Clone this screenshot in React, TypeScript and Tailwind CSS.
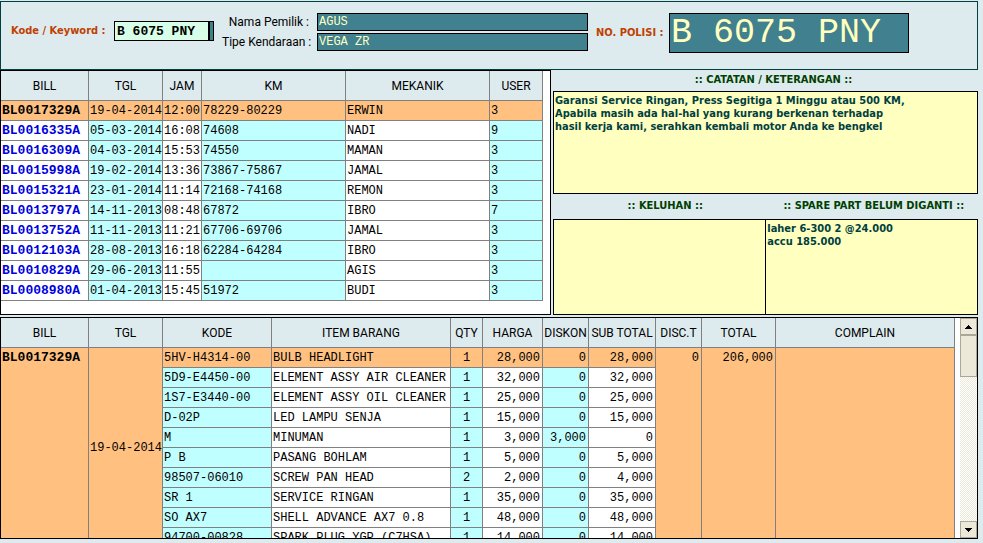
import React from "react";

type Visit = {
  bill: string;
  tgl: string;
  jam: string;
  km: string;
  mekanik: string;
  user: string;
};

type Item = {
  kode: string;
  nama: string;
  qty: string;
  harga: string;
  diskon: string;
  sub: string;
};

const visits: Visit[] = [
  { bill: "BL0017329A", tgl: "19-04-2014", jam: "12:00", km: "78229-80229", mekanik: "ERWIN", user: "3" },
  { bill: "BL0016335A", tgl: "05-03-2014", jam: "16:08", km: "74608", mekanik: "NADI", user: "9" },
  { bill: "BL0016309A", tgl: "04-03-2014", jam: "15:53", km: "74550", mekanik: "MAMAN", user: "3" },
  { bill: "BL0015998A", tgl: "19-02-2014", jam: "13:36", km: "73867-75867", mekanik: "JAMAL", user: "3" },
  { bill: "BL0015321A", tgl: "23-01-2014", jam: "11:14", km: "72168-74168", mekanik: "REMON", user: "3" },
  { bill: "BL0013797A", tgl: "14-11-2013", jam: "08:48", km: "67872", mekanik: "IBRO", user: "7" },
  { bill: "BL0013752A", tgl: "11-11-2013", jam: "11:21", km: "67706-69706", mekanik: "JAMAL", user: "3" },
  { bill: "BL0012103A", tgl: "28-08-2013", jam: "16:18", km: "62284-64284", mekanik: "IBRO", user: "3" },
  { bill: "BL0010829A", tgl: "29-06-2013", jam: "11:55", km: "", mekanik: "AGIS", user: "3" },
  { bill: "BL0008980A", tgl: "01-04-2013", jam: "15:45", km: "51972", mekanik: "BUDI", user: "3" },
];

const items: Item[] = [
  { kode: "5HV-H4314-00", nama: "BULB HEADLIGHT", qty: "1", harga: "28,000", diskon: "0", sub: "28,000" },
  { kode: "5D9-E4450-00", nama: "ELEMENT ASSY AIR CLEANER", qty: "1", harga: "32,000", diskon: "0", sub: "32,000" },
  { kode: "1S7-E3440-00", nama: "ELEMENT ASSY OIL CLEANER", qty: "1", harga: "25,000", diskon: "0", sub: "25,000" },
  { kode: "D-02P", nama: "LED LAMPU SENJA", qty: "1", harga: "15,000", diskon: "0", sub: "15,000" },
  { kode: "M", nama: "MINUMAN", qty: "1", harga: "3,000", diskon: "3,000", sub: "0" },
  { kode: "P B", nama: "PASANG BOHLAM", qty: "1", harga: "5,000", diskon: "0", sub: "5,000" },
  { kode: "98507-06010", nama: "SCREW PAN HEAD", qty: "2", harga: "2,000", diskon: "0", sub: "4,000" },
  { kode: "SR 1", nama: "SERVICE RINGAN", qty: "1", harga: "35,000", diskon: "0", sub: "35,000" },
  { kode: "SO AX7", nama: "SHELL ADVANCE AX7 0.8", qty: "1", harga: "48,000", diskon: "0", sub: "48,000" },
  { kode: "94700-00828", nama: "SPARK PLUG YGP (C7HSA)", qty: "1", harga: "14,000", diskon: "0", sub: "14,000" },
];

const mono = "font-['Liberation_Mono',monospace]";
const sans = "font-['Roboto',sans-serif]";
const bold = "font-['DejaVu_Sans_Condensed','DejaVu_Sans',sans-serif] font-bold";

const cell = "h-5 border-r border-b border-[#808080] px-px leading-4 whitespace-nowrap overflow-hidden";
const number = "text-right pr-[2px]";
const billCell = "text-[13px] font-bold";
const field = `h-[18px] w-full rounded-none border border-black bg-[#40808f] px-px text-[12px] text-[#ffffc0] outline-none ${mono}`;
const note = `block w-full resize-none overflow-hidden rounded-none border border-black bg-[#ffffc0] px-px py-[2px] text-[11px] leading-[13px] text-[#004040] outline-none ${bold}`;
const noteTitle = `text-center text-[11px] text-[#004000] ${bold}`;

function Th({ children }: { children: React.ReactNode }) {
  return (
    <th
      scope="col"
      className={`h-[30px] border-r border-b border-[#808080] bg-[#ddebee] p-0 text-[12px] font-normal whitespace-nowrap ${sans}`}
    >
      {children}
    </th>
  );
}

function Arrow({ up }: { up?: boolean }) {
  return (
    <svg width="7" height="4" viewBox="0 0 7 4" shapeRendering="crispEdges" aria-hidden="true">
      <path d={up ? "M3 0h1v1h1v1h1v1h1v1H0V3h1V2h1V1h1z" : "M0 0h7v1H6v1H5v1H4v1H3V3H2V2H1V1H0z"} fill="#000" />
    </svg>
  );
}

function SearchPanel() {
  return (
    <header className="flex h-[69px] shrink-0 items-start border border-[#004040] pt-[11px] pl-[10px]">
      <div className="flex h-9 items-center">
        <label htmlFor="keyword" className={`w-[103px] text-[11px] text-[#c04000] ${bold}`}>
          Kode / Keyword :
        </label>
        <div className="flex h-5 w-[100px] border border-black bg-[#40808f] pr-[3px]">
          <input
            id="keyword"
            defaultValue="B 6075 PNY"
            className={`h-full w-full rounded-none border-r-2 border-black bg-[#d8ffe8] px-[2px] text-[13px] font-bold outline-none ${mono}`}
          />
        </div>
      </div>
      <div className={`ml-2 grid grid-cols-[87px_271px] items-center gap-x-2 gap-y-[2px] text-[12px] whitespace-nowrap ${sans}`}>
        <label htmlFor="nama" className="text-right">Nama Pemilik :</label>
        <input id="nama" defaultValue="AGUS" className={field} />
        <label htmlFor="tipe" className="text-right">Tipe Kendaraan :</label>
        <input id="tipe" defaultValue="VEGA ZR" className={field} />
      </div>
      <div className="ml-2 flex items-center">
        <label htmlFor="nopol" className={`w-[73px] text-[11px] whitespace-nowrap text-[#c04000] ${bold}`}>
          NO. POLISI :
        </label>
        <input
          id="nopol"
          defaultValue="B 6075 PNY"
          className={`h-10 w-60 rounded-none border border-black bg-[#40808f] px-px text-[35px] text-[#ffffc0] outline-none ${mono}`}
        />
      </div>
    </header>
  );
}

function VisitTable() {
  return (
    <div className="w-[551px] shrink-0 overflow-hidden border border-black bg-white">
      <table className={`w-[542px] table-fixed border-separate border-spacing-0 text-[12px] ${mono}`}>
        <colgroup>
          <col className="w-[88px]" />
          <col className="w-[74px]" />
          <col className="w-[39px]" />
          <col className="w-36" />
          <col className="w-36" />
          <col className="w-[53px]" />
        </colgroup>
        <thead>
          <tr>
            <Th>BILL</Th>
            <Th>TGL</Th>
            <Th>JAM</Th>
            <Th>KM</Th>
            <Th>MEKANIK</Th>
            <Th>USER</Th>
          </tr>
        </thead>
        <tbody>
          {visits.map((v, i) => {
            const cyan = i === 0 ? "bg-[#ffc080]" : "bg-[#c0ffff]";
            const plain = i === 0 ? "bg-[#ffc080]" : "bg-white";
            return (
              <tr key={v.bill}>
                <td className={`${cell} ${plain} ${billCell} ${i === 0 ? "text-black" : "text-[#0000e0]"}`}>{v.bill}</td>
                <td className={`${cell} ${cyan}`}>{v.tgl}</td>
                <td className={`${cell} ${plain}`}>{v.jam}</td>
                <td className={`${cell} ${cyan}`}>{v.km}</td>
                <td className={`${cell} ${plain}`}>{v.mekanik}</td>
                <td className={`${cell} ${cyan}`}>{v.user}</td>
              </tr>
            );
          })}
        </tbody>
      </table>
    </div>
  );
}

function Notes() {
  return (
    <section className="flex min-w-0 flex-1 flex-col">
      <label htmlFor="catatan" className={`flex h-[21px] items-center justify-center pl-4 ${noteTitle}`}>
        :: CATATAN / KETERANGAN ::
      </label>
      <textarea
        id="catatan"
        className={`h-[103px] ${note}`}
        defaultValue={
          "Garansi Service Ringan, Press Segitiga 1 Minggu atau 500 KM,\nApabila masih ada hal-hal yang kurang berkenan terhadap\nhasil kerja kami, serahkan kembali motor Anda ke bengkel"
        }
      />
      <div className="flex h-[25px] items-center">
        <label htmlFor="keluhan" className={`flex-1 pl-2 ${noteTitle}`}>:: KELUHAN ::</label>
        <label htmlFor="sparepart" className={`flex-1 ${noteTitle}`}>:: SPARE PART BELUM DIGANTI ::</label>
      </div>
      <div className="flex h-24">
        <textarea id="keluhan" className={`h-full border-r-0 ${note}`} />
        <textarea id="sparepart" className={`h-full ${note}`} defaultValue={"laher 6-300 2 @24.000\naccu 185.000"} />
      </div>
    </section>
  );
}

function ItemTable() {
  const merged = `${cell} bg-[#ffc080] align-top pt-[2px]`;
  return (
    <div className="mt-[2px] mb-1 flex min-h-0 flex-1 overflow-hidden border border-black bg-white">
      <div className="min-w-0 flex-1 overflow-hidden pr-[5px]">
        <table className={`w-full table-fixed border-separate border-spacing-0 text-[12px] ${mono}`}>
          <colgroup>
            <col className="w-[88px]" />
            <col className="w-[74px]" />
            <col className="w-[109px]" />
            <col className="w-[179px]" />
            <col className="w-8" />
            <col className="w-[60px]" />
            <col className="w-[46px]" />
            <col className="w-[67px]" />
            <col className="w-[46px]" />
            <col className="w-[74px]" />
            <col />
          </colgroup>
          <thead>
            <tr>
              <Th>BILL</Th>
              <Th>TGL</Th>
              <Th>KODE</Th>
              <Th>ITEM BARANG</Th>
              <Th>QTY</Th>
              <Th>HARGA</Th>
              <Th>DISKON</Th>
              <Th>SUB TOTAL</Th>
              <Th>DISC.T</Th>
              <Th>TOTAL</Th>
              <Th>COMPLAIN</Th>
            </tr>
          </thead>
          <tbody>
            {items.map((it, i) => {
              const cyan = i === 0 ? "bg-[#ffc080]" : "bg-[#c0ffff]";
              const plain = i === 0 ? "bg-[#ffc080]" : "bg-white";
              return (
                <tr key={it.kode}>
                  {i === 0 && (
                    <>
                      <td rowSpan={items.length} className={`${merged} ${billCell}`}>BL0017329A</td>
                      <td rowSpan={items.length} className={`${cell} bg-[#ffc080] align-middle`}>19-04-2014</td>
                    </>
                  )}
                  <td className={`${cell} ${cyan}`}>{it.kode}</td>
                  <td className={`${cell} ${plain}`}>{it.nama}</td>
                  <td className={`${cell} ${cyan} text-center`}>{it.qty}</td>
                  <td className={`${cell} ${plain} ${number}`}>{it.harga}</td>
                  <td className={`${cell} ${cyan} ${number}`}>{it.diskon}</td>
                  <td className={`${cell} ${plain} ${number}`}>{it.sub}</td>
                  {i === 0 && (
                    <>
                      <td rowSpan={items.length} className={`${merged} ${number}`}>0</td>
                      <td rowSpan={items.length} className={`${merged} ${number}`}>206,000</td>
                      <td rowSpan={items.length} className={merged} />
                    </>
                  )}
                </tr>
              );
            })}
          </tbody>
        </table>
      </div>
      <div className="flex w-[17px] shrink-0 flex-col bg-[repeating-conic-gradient(#ece9d8_0_25%,#ffffff_0_50%)] bg-[length:2px_2px]">
        <button type="button" aria-label="Scroll up" className="flex h-[17px] items-center justify-center border border-[#aca899] bg-[#ece9d8]">
          <Arrow up />
        </button>
        <div className="h-[42px] border border-[#aca899] bg-[#ece9d8]" />
        <button type="button" aria-label="Scroll down" className="mt-auto flex h-[17px] items-center justify-center border border-[#aca899] bg-[#ece9d8]">
          <Arrow />
        </button>
      </div>
    </div>
  );
}

export default function App() {
  return (
    <div className="flex h-screen flex-col bg-[#ddebee] pt-px pr-[5px] text-black">
      <SearchPanel />
      <main className="flex min-h-0 flex-1 flex-col">
        <div className="flex h-[245px] shrink-0 gap-[2px]">
          <VisitTable />
          <Notes />
        </div>
        <ItemTable />
      </main>
    </div>
  );
}
